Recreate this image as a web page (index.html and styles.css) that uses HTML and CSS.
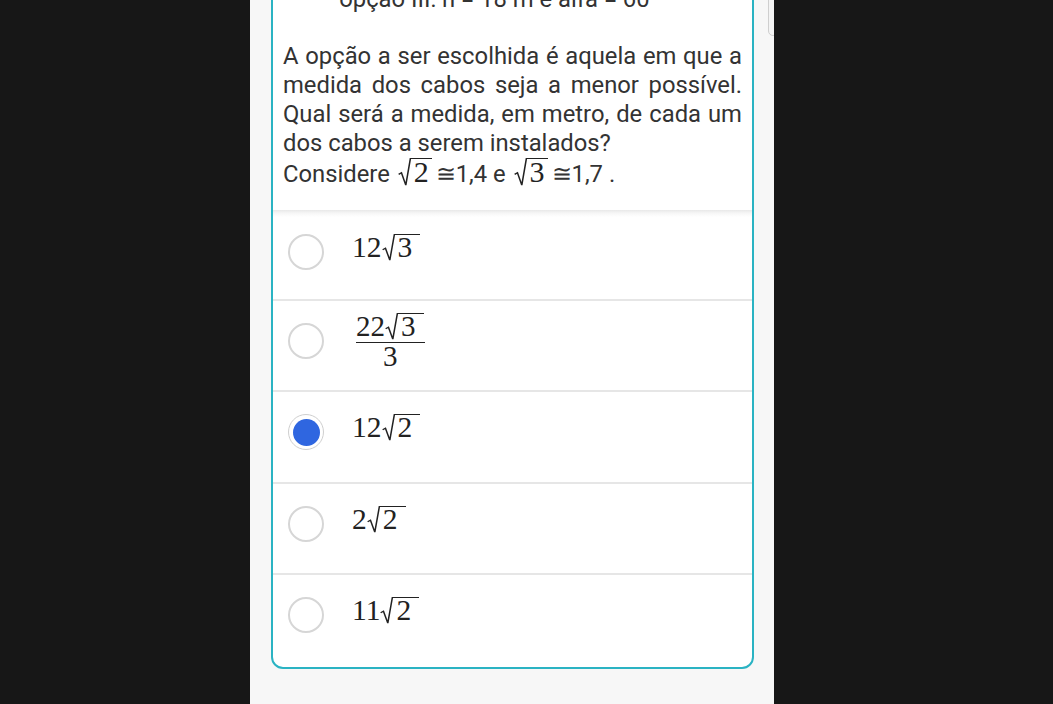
FILE: index.html
```html
<!DOCTYPE html>
<html lang="pt">
<head>
<meta charset="utf-8">
<link rel="stylesheet" href="styles.css">
</head>
<body>
<div class="screen">
  <div class="side"></div>
  <main class="panel">
    <div class="scroll-thumb"></div>
    <section class="card">
      <div class="question">
        <ul class="opts">
          <li>opção III: h = 18 m e alfa = 60</li>
        </ul>
        <p class="para">
          <span class="ln">A opção a ser escolhida é aquela em que a</span>
          <span class="ln">medida dos cabos seja a menor possível.</span>
          <span class="ln">Qual será a medida, em metro, de cada um</span>
          <span class="ln last">dos cabos a serem instalados?</span>
        </p>
        <p class="para consider">Considere <span class="m"><span class="sqrt"><svg class="rad" viewBox="0 0 12 30" preserveAspectRatio="none"><path d="M0.6 17.5 L3.2 15.8 L7.2 29 L11.4 0.8 L12 0.8"/></svg><span class="radicand">2</span></span></span>≅1,4 e <span class="m"><span class="sqrt"><svg class="rad" viewBox="0 0 12 30" preserveAspectRatio="none"><path d="M0.6 17.5 L3.2 15.8 L7.2 29 L11.4 0.8 L12 0.8"/></svg><span class="radicand">3</span></span></span>≅1,7 .</p>
      </div>
      <div class="choices">
        <label class="choice first">
          <span class="radio"></span>
          <span class="math">12<span class="sqrt"><svg class="rad" viewBox="0 0 12 30" preserveAspectRatio="none"><path d="M0.6 17.5 L3.2 15.8 L7.2 29 L11.4 0.8 L12 0.8"/></svg><span class="radicand">3</span></span></span>
        </label>
        <label class="choice">
          <span class="radio"></span>
          <span class="math frac">
            <span class="num">22<span class="sqrt"><svg class="rad" viewBox="0 0 12 30" preserveAspectRatio="none"><path d="M0.6 17.5 L3.2 15.8 L7.2 29 L11.4 0.8 L12 0.8"/></svg><span class="radicand">3</span></span></span>
            <span class="den">3</span>
          </span>
        </label>
        <label class="choice">
          <span class="radio checked"></span>
          <span class="math">12<span class="sqrt"><svg class="rad" viewBox="0 0 12 30" preserveAspectRatio="none"><path d="M0.6 17.5 L3.2 15.8 L7.2 29 L11.4 0.8 L12 0.8"/></svg><span class="radicand">2</span></span></span>
        </label>
        <label class="choice">
          <span class="radio"></span>
          <span class="math">2<span class="sqrt"><svg class="rad" viewBox="0 0 12 30" preserveAspectRatio="none"><path d="M0.6 17.5 L3.2 15.8 L7.2 29 L11.4 0.8 L12 0.8"/></svg><span class="radicand">2</span></span></span>
        </label>
        <label class="choice">
          <span class="radio"></span>
          <span class="math">11<span class="sqrt"><svg class="rad" viewBox="0 0 12 30" preserveAspectRatio="none"><path d="M0.6 17.5 L3.2 15.8 L7.2 29 L11.4 0.8 L12 0.8"/></svg><span class="radicand">2</span></span></span>
        </label>
      </div>
    </section>
  </main>
  <div class="side"></div>
</div>
</body>
</html>
```
FILE: styles.css
```css
html, body {
  margin: 0;
  padding: 0;
  background: #171717;
  height: 704px;
  overflow: hidden;
}
.screen {
  display: flex;
  height: 704px;
}
.side {
  flex: 0 0 250px;
}
.side:last-child {
  flex: 1 1 auto;
}
.panel {
  position: relative;
  flex: 0 0 524px;
  background: #f7f7f7;
  height: 704px;
  overflow: hidden;
}
.scroll-thumb {
  position: absolute;
  right: -4px;
  top: -10px;
  width: 8px;
  height: 44px;
  border: 1px solid #cfcfcf;
  border-radius: 5px;
  background: #f4f4f4;
}
.card {
  margin: -41px 0 0 21px;
  width: 483px;
  box-sizing: border-box;
  background: #fff;
  border: 2px solid #2ab3c3;
  border-radius: 12px;
  overflow: hidden;
}
.question {
  padding: 24px 10px 0 10px;
  font-family: Roboto, "Liberation Sans", sans-serif;
  font-size: 23.8px;
  line-height: 29px;
  color: #333;
}
.opts {
  margin: 0;
  padding: 0 0 0 57px;
  list-style: none;
  white-space: nowrap;
}
.opts li::before {
  content: "·";
  margin-right: 5px;
  margin-left: -12px;
}
.para {
  margin: 28px 0 0 0;
}
.ln {
  display: block;
  white-space: nowrap;
  text-align: justify;
  text-align-last: justify;
  word-spacing: -1.5px;
}
.ln.last {
  text-align: left;
  text-align-last: left;
  word-spacing: 0;
}
.consider {
  margin-top: 0;
  height: 29px;
  white-space: nowrap;
}
.m {
  font-family: "Liberation Serif", "DejaVu Serif", serif;
  font-size: 30px;
  color: #222;
  line-height: 0;
  margin: 0 4px 0 2px;
}
.m .radicand {
  line-height: 23px;
  padding-right: 3px;
}
.sqrt {
  display: inline-block;
  position: relative;
  padding-left: 13px;
  line-height: 0;
}
.rad {
  position: absolute;
  left: 0;
  top: 0;
  width: 13px;
  height: calc(100% + 3px);
  fill: none;
  stroke: #222;
  stroke-width: 1.4;
  vector-effect: non-scaling-stroke;
}
.radicand {
  display: inline-block;
  border-top: 1.5px solid #222;
  padding: 1px 8px 0 3px;
  line-height: 22px;
}
.choices {
  margin-top: 23px;
  padding-bottom: 2px;
}
.choice {
  display: flex;
  align-items: center;
  box-sizing: border-box;
  height: 91.5px;
  padding: 0 0 9px 15px;
  border-top: 2px solid #e6e6e6;
}
.choice.first {
  border-top: none;
  height: 88.5px;
  padding-top: 4px;
  background: linear-gradient(#e8e8e8, #f6f6f6 3px, #fff 7px);
}
.radio {
  flex: 0 0 auto;
  width: 36px;
  height: 36px;
  box-sizing: border-box;
  border: 2px solid #d6d6d6;
  border-radius: 50%;
  margin-right: 28px;
  background: #fff;
}
.radio.checked {
  border: 1.5px solid #cfcfcf;
  padding: 3.5px;
  background: #2f66e0 content-box;
}
.math {
  font-family: "Liberation Serif", "DejaVu Serif", serif;
  font-size: 29.5px;
  color: #222;
  line-height: 22px;
  margin-bottom: 12px;
}
.frac {
  display: inline-flex;
  flex-direction: column;
  align-items: center;
  font-size: 29px;
  padding-left: 4px;
  margin-bottom: 3px;
}
.frac .num {
  display: block;
  padding: 0 1px 5px 0;
  border-bottom: 1.5px solid #222;
}
.frac .den {
  display: block;
  padding-top: 3px;
  line-height: 20px;
}
```
